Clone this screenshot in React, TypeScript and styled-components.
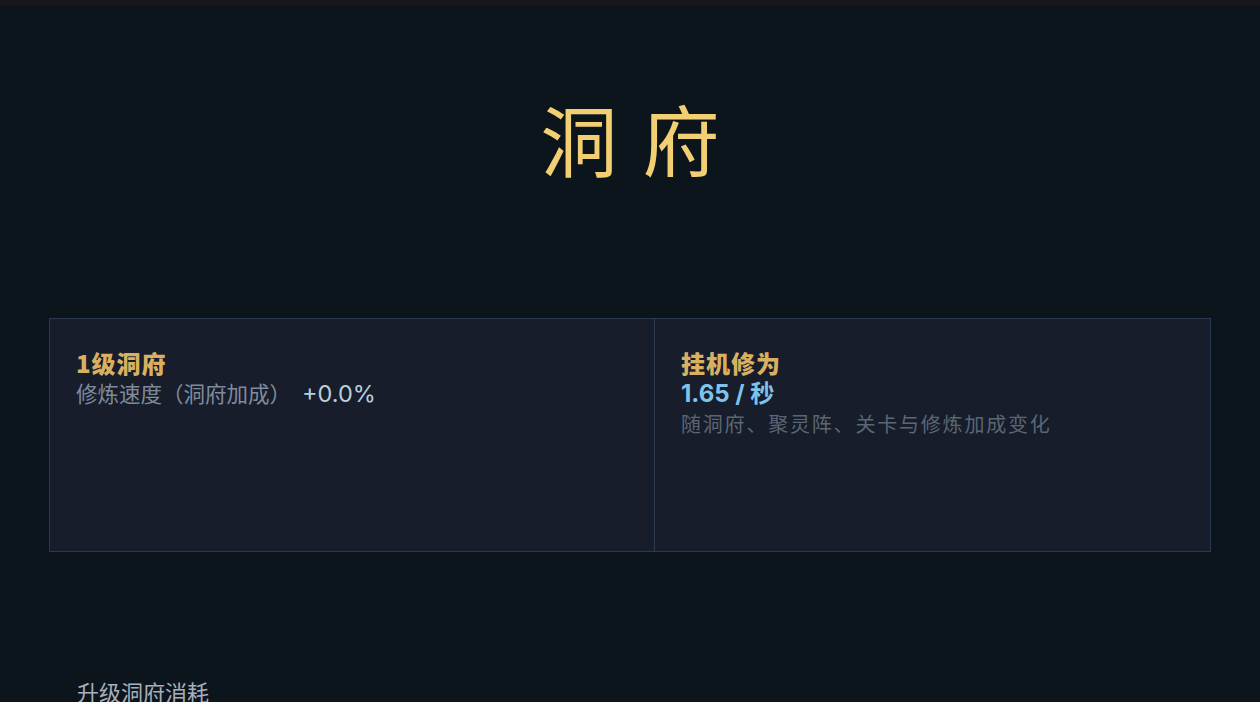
import * as React from 'react'
import styled, { createGlobalStyle } from 'styled-components'

// ___________________________________________________________________

const Global = createGlobalStyle`
  html, body {
    margin: 0;
    padding: 0;
    background: #0d151c;
  }

  body {
    font-family: Inter, 'Noto Sans CJK SC', sans-serif;
    overflow: hidden;
  }
`

const Page = styled.div`
  min-height: 702px;
  background: #0d151c;
  border-top: 5px solid #18171d;
`

const Header = styled.header`
  display: flex;
  justify-content: center;
  padding-top: 89px;
  height: 216px;
  box-sizing: border-box;
`

const Title = styled.h1`
  margin: 0;
  padding-left: 25px;
  font-family: 'Noto Sans CJK SC', sans-serif;
  font-size: 77px;
  font-weight: 400;
  line-height: 88px;
  letter-spacing: 25px;
  color: #f1cf72;
`

const Stats = styled.section`
  display: grid;
  grid-template-columns: 604px 1fr;
  margin: 97px 49px 0;
  height: 234px;
  border: 1px solid #2c3a50;
  background: #171d2b;
  box-sizing: border-box;
`

const Cell = styled.div<{ $divider?: boolean }>`
  display: flex;
  flex-direction: column;
  padding: 28px 26px;
  border-left: ${p => (p.$divider ? '1px solid #2c3a50' : 'none')};
`

const Label = styled.div`
  font-family: 'Noto Sans CJK SC', sans-serif;
  font-size: 24px;
  font-weight: 900;
  line-height: 31px;
  letter-spacing: 1px;
  color: #d9b062;
`

const Line = styled.div`
  font-size: 21.5px;
  line-height: 31px;
  color: #7f8b9a;
`

const Value = styled.span`
  margin-left: 11px;
  font-family: Inter, sans-serif;
  font-size: 23.5px;
  color: #b5cfde;
`

const Rate = styled.div`
  font-size: 24px;
  font-weight: 700;
  line-height: 31px;
  color: #7ec4ea;
`

const Hint = styled.div`
  margin-top: 1px;
  font-size: 20px;
  line-height: 31px;
  letter-spacing: 1.8px;
  color: #5b6675;
`

const Upgrade = styled.section`
  padding: 124px 77px 0;
`

const SectionTitle = styled.h2`
  margin: 0;
  font-family: 'Noto Sans CJK SC', sans-serif;
  font-size: 22px;
  font-weight: 400;
  line-height: 30px;
  color: #a7afbd;
`

export default function App() {
  return (
    <>
      <Global />
      <Page>
        <Header>
          <Title>洞府</Title>
        </Header>
        <Stats>
          <Cell>
            <Label>1级洞府</Label>
            <Line>
              修炼速度（洞府加成）<Value>+0.0%</Value>
            </Line>
          </Cell>
          <Cell $divider>
            <Label>挂机修为</Label>
            <Rate>1.65 / 秒</Rate>
            <Hint>随洞府、聚灵阵、关卡与修炼加成变化</Hint>
          </Cell>
        </Stats>
        <Upgrade>
          <SectionTitle>升级洞府消耗</SectionTitle>
        </Upgrade>
      </Page>
    </>
  )
}
